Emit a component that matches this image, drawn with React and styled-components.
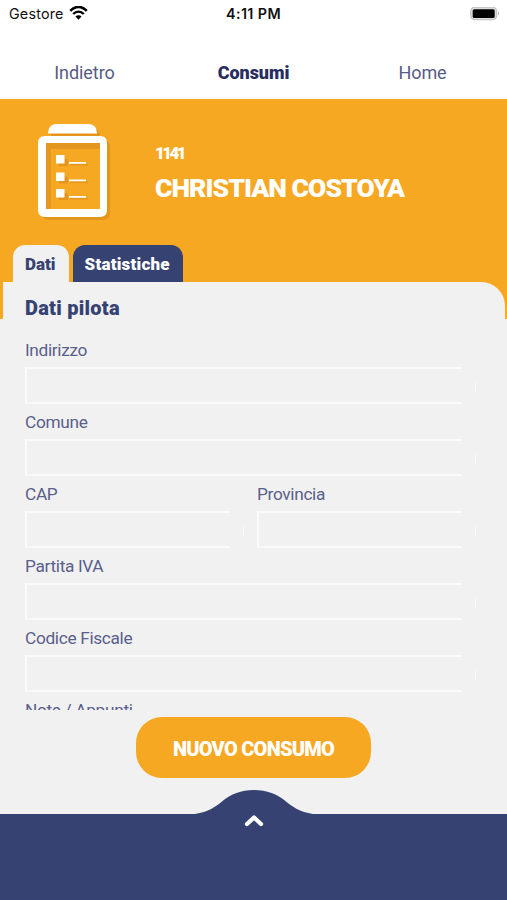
import React from "react";
import styled, { createGlobalStyle } from "styled-components";

const orange = "#f7a823";
const navy = "#364272";
const grey = "#f1f1f1";

const GlobalStyle = createGlobalStyle`
  * {
    box-sizing: border-box;
  }

  body {
    margin: 0;
    background: ${grey};
    font-family: Roboto, "Liberation Sans", sans-serif;
    color: ${navy};
  }
`;

const Screen = styled.div`
  display: flex;
  flex-direction: column;
  width: 507px;
  height: 900px;
  overflow: hidden;
`;

const StatusBar = styled.div`
  display: grid;
  grid-template-columns: 1fr auto 1fr;
  align-items: center;
  height: 28px;
  padding: 0 7px 0 9px;
  background: white;
  color: #111;
  font-family: Inter, "Liberation Sans", sans-serif;
  font-size: 14.3px;
`;

const Carrier = styled.div`
  display: flex;
  align-items: center;
  gap: 5px;
  margin-top: -2px;
  letter-spacing: 0.2px;
`;

const Clock = styled.div`
  margin: -2px 2px 0 0;
  font-weight: 600;
  letter-spacing: 0.4px;
`;

const Battery = styled.svg`
  justify-self: end;
`;

const NavBar = styled.nav`
  display: grid;
  grid-template-columns: repeat(3, 1fr);
  align-items: center;
  height: 70.5px;
  padding-top: 18px;
  background: white;
  font-size: 18px;
  text-align: center;
`;

const NavItem = styled.a`
  color: ${props => (props.$active ? "#272d5f" : "#575c86")};
  font-weight: ${props => (props.$active ? 900 : 400)};
  letter-spacing: -0.05px;
`;

const Hero = styled.header`
  display: flex;
  flex-direction: column;
  justify-content: space-between;
  height: 220.5px;
  padding: 25px 12px 37px 13px;
  background: ${orange};
`;

const Profile = styled.div`
  display: flex;
  gap: 42px;
  padding-left: 24px;
`;

const Person = styled.div`
  padding-top: 19px;
  color: white;
  font-weight: 900;
`;

const Code = styled.div`
  font-size: 17px;
  line-height: 20px;
  letter-spacing: -2.6px;
`;

const Name = styled.div`
  margin-top: 9px;
  font-size: 26.5px;
  line-height: 32px;
  letter-spacing: -0.95px;
  white-space: nowrap;
`;

const Tabs = styled.div`
  display: flex;
  gap: 4px;
`;

const Tab = styled.div`
  height: 37px;
  padding: 0 13px 0 12px;
  border-radius: 12px 12px 0 0;
  background: ${props => (props.$active ? grey : navy)};
  color: ${props => (props.$active ? navy : "white")};
  font-size: 17px;
  font-weight: 900;
  line-height: 39px;
  letter-spacing: ${props => (props.$active ? "0" : "0.2px")};
`;

const Panel = styled.main`
  height: 428px;
  margin: -37px 2px 0 3px;
  padding: 0 28px 0 22px;
  border-radius: 0 24px 0 0;
  background: ${grey};
  overflow: hidden;
`;

const Title = styled.h2`
  height: 50px;
  margin: 0;
  font-size: 20px;
  font-weight: 900;
  line-height: 52px;
  letter-spacing: 0.27px;
`;

const Row = styled.div`
  display: flex;
  gap: 12px;
`;

const Field = styled.label`
  flex: 1;
  height: 72px;
  padding-top: 1px;
  color: #5a5f8b;
  font-size: 17.3px;
  line-height: 34px;
  letter-spacing: -0.34px;
`;

// White edges stop short of the right corner, where only a tick remains.
const Input = styled.input`
  display: block;
  width: 100%;
  height: 37px;
  padding: 0 10px;
  border: 0;
  outline: 0;
  background:
    linear-gradient(#fbfbfb, #fbfbfb) 0 0 / 2px 100%,
    linear-gradient(#fafafa, #fafafa) 0 0 / calc(100% - 15px) 2px,
    linear-gradient(#fafafa, #fafafa) 0 100% / calc(100% - 15px) 2px,
    linear-gradient(#fbfbfb, #fbfbfb) calc(100% - 1px) 55% / 1px 11px,
    ${grey};
  background-repeat: no-repeat;
`;

const Actions = styled.div`
  display: flex;
  justify-content: center;
  height: 80px;
  padding-top: 7px;
`;

const Button = styled.button`
  width: 235px;
  height: 61px;
  padding: 2px 0 0;
  border: 0;
  border-radius: 26px;
  background: ${orange};
  color: white;
  font-family: inherit;
  font-size: 20px;
  font-weight: 900;
  letter-spacing: -0.75px;
`;

const Drawer = styled.footer`
  flex: 1;
  background: linear-gradient(transparent 24px, ${navy} 24px);
  text-align: center;
`;

const fields = [
  ["Indirizzo"],
  ["Comune"],
  ["CAP", "Provincia"],
  ["Partita IVA"],
  ["Codice Fiscale"],
  ["Note / Appunti"]
];

const WifiIcon = () => (
  <svg width="19" height="15" viewBox="0 0 19 15" fill="none">
    <path d="M1.3 4.9C6-.4 13-.4 17.7 4.9" stroke="#000" strokeWidth="2.6" />
    <path d="M4.2 8c3-3.2 7.6-3.2 10.6 0" stroke="#000" strokeWidth="2.4" />
    <path d="M9.5 13.7l-3-3.2c1.6-1.7 4.4-1.7 6 0z" fill="#000" />
  </svg>
);

const ClipboardIcon = () => (
  <svg width="76" height="100" viewBox="0 0 76 100">
    <g fill="#e4951c">
      <path d="M14 13q0-8 8-8h37q4 2 4 7v3H14z" />
      <path d="M8 16h58q7 0 7 7v66q0 7-7 7H12q-7 0-7-7z" />
    </g>
    <path d="M1 19q0-7 7-7h55q7 0 7 7v67q0 7-7 7H8q-7 0-7-7z" fill="#fff" />
    <path d="M9 19h54v66H9z" fill={orange} />
    <path d="M9 19h54v6H14v60H9z" fill="#e39620" />
    <path d="M11 9.5Q11 0 20 0h31q9 0 9 9.5z" fill="#fff" />
    {[31, 48.5, 65].map(y => (
      <g key={y}>
        <path d={`M22 ${y + 4}h9v7h-9zM33 ${y + 9}h18v1.6H33z`} fill="#e4951c" />
        <path d={`M19 ${y}h8.5v8.5H19zM32 ${y + 7}h17v1.7H32z`} fill="#fff" />
      </g>
    ))}
  </svg>
);

const DrawerHandle = () => (
  <svg width="128" height="40" viewBox="0 0 128 40">
    <path
      d="M0 24.5C14 23.5 23 19 32 11.5 41 4 51 0 64 0s23 4 32 11.5c9 7.5 18 12 32 13z"
      fill={navy}
    />
    <path
      d="M57 34l7-6.500 7 6.500"
      fill="none"
      stroke="#fff"
      strokeWidth="4.2"
      strokeLinecap="round"
      strokeLinejoin="round"
    />
  </svg>
);

class App extends React.Component {
  render() {
    return (
      <Screen>
        <GlobalStyle />
        <StatusBar>
          <Carrier>
            Gestore <WifiIcon />
          </Carrier>
          <Clock>4:11 PM</Clock>
          <Battery width="30" height="14" viewBox="0 0 30 14">
            <rect x=".7" y=".2" width="26" height="12.6" rx="4" fill="#ddd" stroke="#bbb" strokeWidth="1" />
            <rect x="2.7" y="2.2" width="22" height="8.8" rx="1.6" fill="#000" />
            <path d="M28 4.3q2 2.2 0 4.4z" fill="#aaa" />
          </Battery>
        </StatusBar>
        <NavBar>
          <NavItem>Indietro</NavItem>
          <NavItem $active>Consumi</NavItem>
          <NavItem>Home</NavItem>
        </NavBar>
        <Hero>
          <Profile>
            <ClipboardIcon />
            <Person>
              <Code>1141</Code>
              <Name>CHRISTIAN COSTOYA</Name>
            </Person>
          </Profile>
          <Tabs>
            <Tab $active>Dati</Tab>
            <Tab>Statistiche</Tab>
          </Tabs>
        </Hero>
        <Panel>
          <Title>Dati pilota</Title>
          {fields.map(row => (
            <Row key={row[0]}>
              {row.map(label => (
                <Field key={label}>
                  {label}
                  <Input />
                </Field>
              ))}
            </Row>
          ))}
        </Panel>
        <Actions>
          <Button>NUOVO CONSUMO</Button>
        </Actions>
        <Drawer>
          <DrawerHandle />
        </Drawer>
      </Screen>
    );
  }
}

export default App;
